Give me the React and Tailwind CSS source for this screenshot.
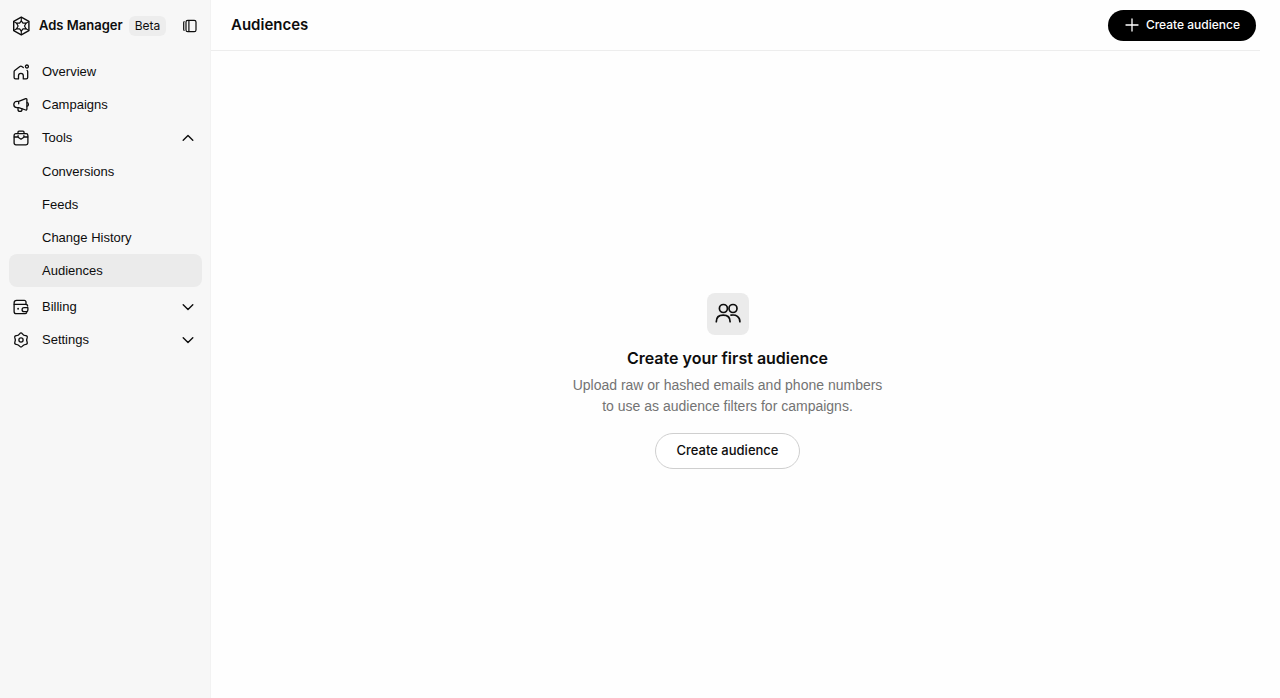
import { useState } from "react";

function Icon({ className = "size-4", width = 1.4, box = "0 0 16 16", children }) {
  return (
    <svg
      className={`shrink-0 ${className}`}
      viewBox={box}
      fill="none"
      stroke="currentColor"
      strokeWidth={width}
      strokeLinecap="round"
      strokeLinejoin="round"
      aria-hidden="true"
    >
      {children}
    </svg>
  );
}

const LogoIcon = () => (
  <Icon className="size-5" box="0 0 20 20" width={1.4}>
    <path d="M10.300 1.200 17.900 5.400v9.200l-7.600 4.200-7.600-4.200V5.400Z" />
    <path d="m10.300 4.800 1.700 2.400h3L13.500 10l1.500 2.800h-3l-1.700 2.400-1.700-2.400h-3L7.100 10 5.600 7.200h3Z" strokeWidth="1.200" />
    <path d="M10.300 1.400v3.400M10.300 15.200v3.400M15 7.200l2.700-1.600M15 12.800l2.700 1.600M5.600 7.200 2.900 5.600M5.600 12.800l-2.700 1.600" strokeWidth="1.100" />
  </Icon>
);

const PanelIcon = () => (
  <Icon width={1.2}>
    <rect x="4" y="2.300" width="10" height="11.400" rx="1.800" />
    <path d="M6.900 2.500v11M2.100 3.600c-.3.300-.4.700-.4 1.200v6.400c0 .5.100.9.400 1.200" />
  </Icon>
);

const HomeIcon = () => (
  <Icon width={1.300}>
    <path d="M10.300 3.600 8.800 2.500a1.600 1.600 0 0 0-1.900 0L1.700 6.500a1.700 1.700 0 0 0-.6 1.300v5.700c0 .8.600 1.400 1.400 1.400h3v-3.200a2.400 2.400 0 0 1 4.800 0v3.200h3c.8 0 1.400-.6 1.400-1.400V7.800c0-.5-.2-1-.6-1.300" />
    <circle cx="13.900" cy="2.500" r="1.500" />
  </Icon>
);

const MegaphoneIcon = () => (
  <Icon width={1.300}>
    <path d="M5.700 4.400H3.900a3.100 3.100 0 0 0 0 6.200h1.800l7 2.400c.6.200 1.200-.2 1.200-.9V2.500c0-.7-.6-1.100-1.200-.9L5.700 4.400v2.400" />
    <path d="M14.100 5.700c1.700.3 1.700 3.200 0 3.500M5 10.800v1.600c0 2.600 4 2.600 4 0v-.6" />
  </Icon>
);

const ToolsIcon = () => (
  <Icon width={1.300}>
    <rect x="1.100" y="3.600" width="13.800" height="11.300" rx="1.800" />
    <path d="M5 3.500V2.100c0-.6.400-1 1-1h4c.6 0 1 .4 1 1v1.400M1.300 7h3.800M10.900 7h3.800M5.100 5.700v1.600L8 9.200l2.900-1.900V5.700" />
  </Icon>
);

const BillingIcon = () => (
  <Icon width={1.300}>
    <path d="M13 5.300V3.100c0-1-.7-1.700-1.700-1.700H3.700c-1.500 0-2.600 1.100-2.600 2.500v8.500c0 1.300 1 2.200 2.200 2.200H12c.8 0 1.400-.4 1.700-1" />
    <path d="M1.300 5.400h11.300c1.200 0 2 .8 2 1.700M14.900 8.700h-3.800a2 2 0 0 0 0 4h2.200c.9 0 1.600-.7 1.600-1.600V8.700Z" />
    <path d="M5.100 9.700v.1" strokeWidth="1.800" />
  </Icon>
);

const SettingsIcon = () => (
  <Icon width={1.300}>
    <path d="M6.600 1.800Q8 0 9.400 1.800 10.600 3.500 12.670 3.690 14.930 4 14.070 6.110 13.200 8 14.070 9.890 14.930 12 12.670 12.310 10.600 12.500 9.400 14.200 8 16 6.600 14.200 5.400 12.500 3.330 12.310 1.070 12 1.930 9.890 2.800 8 1.930 6.110 1.070 4 3.330 3.690 5.400 3.500 6.600 1.800Z" />
    <circle cx="8" cy="8" r="2.100" />
  </Icon>
);

const PeopleIcon = () => (
  <Icon className="size-7" box="0 0 28 28" width={1.700}>
    <circle cx="9.400" cy="8.500" r="4" />
    <circle cx="19" cy="8.500" r="4" />
    <path d="M2.300 21.700c0-4.400 3-6.600 6.900-6.600s6.900 2.200 6.900 6.600M17 15.200c5.300-.9 8.900 1.700 8.900 6.500" />
  </Icon>
);

const Chevron = ({ open }) => (
  <Icon className="ml-auto size-4">
    <path d={open ? "m3.200 10.200 4.800-4.700 4.800 4.700" : "M3.200 5.700 8 10.400l4.800-4.700"} />
  </Icon>
);

const menu = [
  { label: "Overview", icon: HomeIcon },
  { label: "Campaigns", icon: MegaphoneIcon },
  { label: "Tools", icon: ToolsIcon, children: ["Conversions", "Feeds", "Change History", "Audiences"] },
  { label: "Billing", icon: BillingIcon, children: [] },
  { label: "Settings", icon: SettingsIcon, children: [] },
];

const row = "flex h-[33px] w-full items-center gap-[13px] rounded-lg pl-1 pr-1.5 text-left";

function MenuItem({ item }) {
  const [open, setOpen] = useState(item.label === "Tools");
  const Glyph = item.icon;
  if (!item.children) {
    return (
      <li>
        <a href="#" className={row}>
          <Glyph />
          {item.label}
        </a>
      </li>
    );
  }
  return (
    <li>
      <button type="button" aria-expanded={open} onClick={() => setOpen(!open)} className={row}>
        <Glyph />
        {item.label}
        <Chevron open={open} />
      </button>
      {open && item.children.length > 0 && (
        <ul className="pb-[3px] pt-px">
          {item.children.map((name) => (
            <li key={name}>
              <a
                href="#"
                aria-current={name === "Audiences" ? "page" : undefined}
                className="flex h-[33px] items-center rounded-lg pl-[33px] aria-[current=page]:bg-[#ebebeb]"
              >
                {name}
              </a>
            </li>
          ))}
        </ul>
      )}
    </li>
  );
}

export default function App() {
  return (
    <div className="flex min-h-screen bg-[#fefefe] font-['Inter','Liberation_Sans',sans-serif] text-[#0d0d0d]">
      <aside className="w-[211px] shrink-0 border-r border-[#f2f2f2] bg-[#f7f7f7]">
        <div className="flex h-[51px] items-center pl-[11px] pr-3">
          <LogoIcon />
          <span className="ml-2 text-[13px] font-semibold">Ads Manager</span>
          <span className="ml-1.5 rounded-md bg-[#ededed] px-1.5 py-0.5 text-xs leading-4">Beta</span>
          <button type="button" aria-label="Collapse sidebar" className="ml-auto">
            <PanelIcon />
          </button>
        </div>
        <nav className="pl-[9px] pr-2 pt-1 font-['Liberation_Sans',sans-serif] text-[13px]">
          <ul>
            {menu.map((item) => (
              <MenuItem key={item.label} item={item} />
            ))}
          </ul>
        </nav>
      </aside>
      <main className="flex min-w-0 flex-1 flex-col">
        <header className="mr-5 flex h-[51px] items-center justify-between border-b border-[#ededed] pl-5 pr-1">
          <h1 className="text-[15px] font-semibold">Audiences</h1>
          <button type="button" className="flex h-[31px] items-center gap-1.5 rounded-full bg-black px-4 text-xs font-medium text-white">
            <Icon className="size-4" width={1.3}>
              <path d="M8 2v12M2 8h12" />
            </Icon>
            Create audience
          </button>
        </header>
        <section className="flex flex-1 flex-col items-center justify-center pr-9 pt-3 text-center">
          <div className="flex size-[42px] items-center justify-center rounded-lg bg-[#ebebeb]">
            <PeopleIcon />
          </div>
          <h2 className="mt-3 text-base font-semibold leading-[22px]">Create your first audience</h2>
          <p className="mt-1.5 w-[320px] font-['Liberation_Sans',sans-serif] text-sm leading-[21px] text-[#737373]">
            Upload raw or hashed emails and phone numbers to use as audience filters for campaigns.
          </p>
          <button type="button" className="mt-4 h-9 rounded-full border border-[#cfcfcf] bg-white px-[21px] text-[13px] font-medium">
            Create audience
          </button>
        </section>
      </main>
    </div>
  );
}
